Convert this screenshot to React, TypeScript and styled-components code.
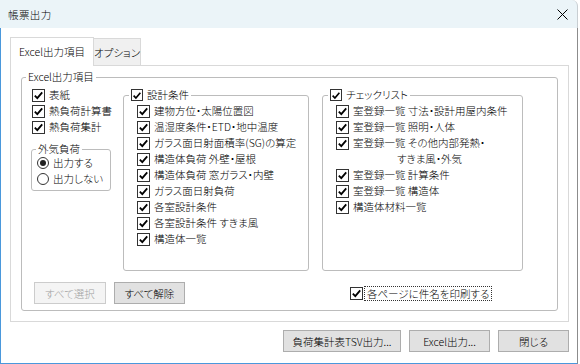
import styled, { createGlobalStyle } from "styled-components";
import { useState } from "react";

const GlobalStyle = createGlobalStyle`
  * { box-sizing: border-box; }
  html, body { margin: 0; padding: 0; background: #fff; }
  body {
    font-family: "Noto Sans CJK JP", "Noto Sans", sans-serif;
    font-size: 10.5px;
    font-weight: 300;
    color: #000;
    font-feature-settings: "palt" 1;
  }
`;

const designItems = [
  "建物方位・太陽位置図",
  "温湿度条件・ETD・地中温度",
  "ガラス面日射面積率(SG)の算定",
  "構造体負荷 外壁・屋根",
  "構造体負荷 窓ガラス・内壁",
  "ガラス面日射負荷",
  "各室設計条件",
  "各室設計条件 すきま風",
  "構造体一覧",
];

const checkItems: [string, string?][] = [
  ["室登録一覧 寸法・設計用屋内条件"],
  ["室登録一覧 照明・人体"],
  ["室登録一覧 その他内部発熱・", "すきま風・外気"],
  ["室登録一覧 計算条件"],
  ["室登録一覧 構造体"],
  ["構造体材料一覧"],
];

const CheckMark = () => (
  <svg width="11" height="11" viewBox="0 0 11 11">
    <path d="M1.8 5.6 L4.3 8.2 L9.2 2.4" fill="none" stroke="#000" strokeWidth="1.8" />
  </svg>
);

const Check = ({
  label,
  checked,
  onToggle,
  small,
}: {
  label: React.ReactNode;
  checked: boolean;
  onToggle: () => void;
  small?: boolean;
}) => (
  <CheckRow onClick={onToggle}>
    <Box $size={small ? 12 : 13}>{checked && <CheckMark />}</Box>
    <Label>{label}</Label>
  </CheckRow>
);

export default function App() {
  const [left, setLeft] = useState([true, true, true]);
  const [design, setDesign] = useState(designItems.map(() => true));
  const [list, setList] = useState(checkItems.map(() => true));
  const [designAll, setDesignAll] = useState(true);
  const [listAll, setListAll] = useState(true);
  const [outside, setOutside] = useState(0);
  const [printName, setPrintName] = useState(true);

  const flip = (arr: boolean[], i: number) => arr.map((v, j) => (j === i ? !v : v));

  return (
    <>
      <GlobalStyle />
      <Window>
        <TitleBar>
          <span>帳票出力</span>
          <svg width="11" height="11" viewBox="0 0 11 11">
            <path d="M0.5 0.5 L10.5 10.5 M10.5 0.5 L0.5 10.5" stroke="#000" strokeWidth="1" />
          </svg>
        </TitleBar>
        <Body>
          <TabStrip>
            <Tab $active>Excel出力項目</Tab>
            <Tab>オプション</Tab>
          </TabStrip>
          <Panel>
            <Group $w={537}>
              <Legend $x={4}>Excel出力項目</Legend>
              <GroupInner>
                <Columns>
                  <LeftCol>
                    {["表紙", "熱負荷計算書", "熱負荷集計"].map((t, i) => (
                      <Check
                        key={t}
                        label={t}
                        checked={left[i]}
                        onToggle={() => setLeft(flip(left, i))}
                      />
                    ))}
                    <OutsideGroup $w={80}>
                      <Legend $x={4}>外気負荷</Legend>
                      <RadioList>
                        {["出力する", "出力しない"].map((t, i) => (
                          <CheckRow key={t} onClick={() => setOutside(i)}>
                            <Radio $on={outside === i} />
                            <Label>{t}</Label>
                          </CheckRow>
                        ))}
                      </RadioList>
                    </OutsideGroup>
                  </LeftCol>

                  <ListGroup $w={186}>
                    <Legend $x={5}>
                      <Check
                        small
                        label="設計条件"
                        checked={designAll}
                        onToggle={() => setDesignAll(!designAll)}
                      />
                    </Legend>
                    <Items>
                      {designItems.map((t, i) => (
                        <Check
                          key={t}
                          label={t}
                          checked={design[i]}
                          onToggle={() => setDesign(flip(design, i))}
                        />
                      ))}
                    </Items>
                  </ListGroup>

                  <ListGroup $w={201}>
                    <Legend $x={5}>
                      <Check
                        small
                        label="チェックリスト"
                        checked={listAll}
                        onToggle={() => setListAll(!listAll)}
                      />
                    </Legend>
                    <Items>
                      {checkItems.map(([a, b], i) => (
                        <Check
                          key={a}
                          label={
                            b ? (
                              <>
                                {a}
                                <br />
                                <Indent>{b}</Indent>
                              </>
                            ) : (
                              a
                            )
                          }
                          checked={list[i]}
                          onToggle={() => setList(flip(list, i))}
                        />
                      ))}
                    </Items>
                  </ListGroup>
                </Columns>

                <BottomRow>
                  <Button $w={72} disabled>
                    すべて選択
                  </Button>
                  <Button $w={71}>すべて解除</Button>
                  <PrintCheck onClick={() => setPrintName(!printName)}>
                    <Box $size={13}>{printName && <CheckMark />}</Box>
                    <Focus>各ページに件名を印刷する</Focus>
                  </PrintCheck>
                </BottomRow>
              </GroupInner>
            </Group>
          </Panel>
          <Footer>
            <Button $w={118}>負荷集計表TSV出力...</Button>
            <Button $w={81}>Excel出力...</Button>
            <Button $w={71}>閉じる</Button>
          </Footer>
        </Body>
      </Window>
    </>
  );
}

const Window = styled.div`
  width: 578px;
  height: 364px;
  display: flex;
  flex-direction: column;
  background: #fff;
`;

const TitleBar = styled.div`
  height: 28px;
  flex: none;
  display: flex;
  align-items: center;
  justify-content: space-between;
  padding: 0 9px 0 8px;
  background: #ebf4f8;
  border-top-right-radius: 6px;
  border-right: 1px solid #c8ced2;
  font-size: 10.5px;
  letter-spacing: 0.4px;
`;

const Body = styled.div`
  flex: 1;
  display: flex;
  flex-direction: column;
  padding: 9px 8px 11px 9px;
  border-left: 1px solid #4a98dc;
  border-bottom: 1px solid #4a98dc;
  border-right: 1px solid #8c8c8c;
`;

const TabStrip = styled.div`
  height: 28px;
  display: flex;
  align-items: flex-end;
`;

const Tab = styled.div<{ $active?: boolean }>`
  position: relative;
  z-index: ${({ $active }) => ($active ? 1 : 0)};
  width: ${({ $active }) => ($active ? 84 : 47)}px;
  height: ${({ $active }) => ($active ? 29 : 27)}px;
  margin-bottom: ${({ $active }) => ($active ? -1 : 0)}px;
  display: flex;
  align-items: center;
  justify-content: center;
  padding-bottom: ${({ $active }) => ($active ? 1 : 0)}px;
  background: ${({ $active }) => ($active ? "#fff" : "#f0f0f0")};
  border: 1px solid #d9d9d9;
  border-bottom: none;
  border-left: ${({ $active }) => ($active ? "1px solid #d9d9d9" : "none")};
  white-space: nowrap;
`;

const Panel = styled.div`
  width: 559px;
  padding: 11px 10px 10px 10px;
  border: 1px solid #d9d9d9;
`;

const Group = styled.div<{ $w: number }>`
  width: ${({ $w }) => $w}px;
  display: flex;
  flex-direction: column;
  border: 1px solid #bcbcbc;
  border-radius: 3px;
`;

const OutsideGroup = styled(Group)`
  margin: 14px 0 0 -1px;
`;

const ListGroup = styled(Group)`
  height: 176px;
  margin-top: 8px;
`;

const Legend = styled.div<{ $x: number }>`
  align-self: flex-start;
  height: 16px;
  line-height: 16px;
  margin: -9px 0 0 ${({ $x }) => $x}px;
  padding: 0 2px;
  background: #fff;
  display: flex;
  white-space: nowrap;
`;

const GroupInner = styled.div`
  padding: 2px 0 6px 10px;
`;

const Columns = styled.div`
  display: flex;
  align-items: flex-start;
  gap: 13px;
`;

const LeftCol = styled.div`
  width: 78px;
  display: flex;
  flex-direction: column;
`;

const RadioList = styled.div`
  margin-top: -2px;
  padding: 0 0 3px 5px;
`;

const Items = styled.div`
  padding-left: 13px;
`;

const CheckRow = styled.label`
  display: flex;
  align-items: flex-start;
  gap: 4px;
  min-height: 16px;
  line-height: 16px;
  white-space: nowrap;
  cursor: default;
  user-select: none;
`;

const Label = styled.span`
  display: block;
`;

const Indent = styled.span`
  padding-left: 44px;
`;

const Box = styled.span<{ $size: number }>`
  flex: none;
  width: ${({ $size }) => $size}px;
  height: ${({ $size }) => $size}px;
  margin-top: ${({ $size }) => (16 - $size) / 2}px;
  border: 1px solid #333;
  background: #fff;
  display: flex;
  align-items: center;
  justify-content: center;
`;

const Radio = styled.span<{ $on: boolean }>`
  flex: none;
  width: 12px;
  height: 12px;
  margin-top: 2px;
  border: 1px solid #333;
  border-radius: 50%;
  background: #fff;
  display: flex;
  align-items: center;
  justify-content: center;
  &::after {
    content: "";
    width: 6px;
    height: 6px;
    border-radius: 50%;
    background: ${({ $on }) => ($on ? "#222" : "transparent")};
  }
`;

const BottomRow = styled.div`
  display: flex;
  align-items: center;
  gap: 8px;
  margin: 11px 0 0 2px;
`;

const Button = styled.button<{ $w: number }>`
  width: ${({ $w }) => $w}px;
  height: 22px;
  padding: 0;
  font: inherit;
  color: #000;
  background: #e1e1e1;
  border: 1px solid #adadad;
  white-space: nowrap;
  &:disabled {
    color: #a0a0a0;
    background: #f4f4f4;
    border-color: #cccccc;
  }
`;

const PrintCheck = styled.label`
  display: flex;
  align-items: center;
  gap: 2px;
  margin-left: 157px;
  cursor: default;
`;

const Focus = styled.span`
  padding: 0 2px;
  line-height: 13px;
  outline: 1px dotted #333;
  white-space: nowrap;
`;

const Footer = styled.div`
  display: flex;
  justify-content: flex-end;
  gap: 8px;
  margin-top: 8px;
  width: 559px;
`;
